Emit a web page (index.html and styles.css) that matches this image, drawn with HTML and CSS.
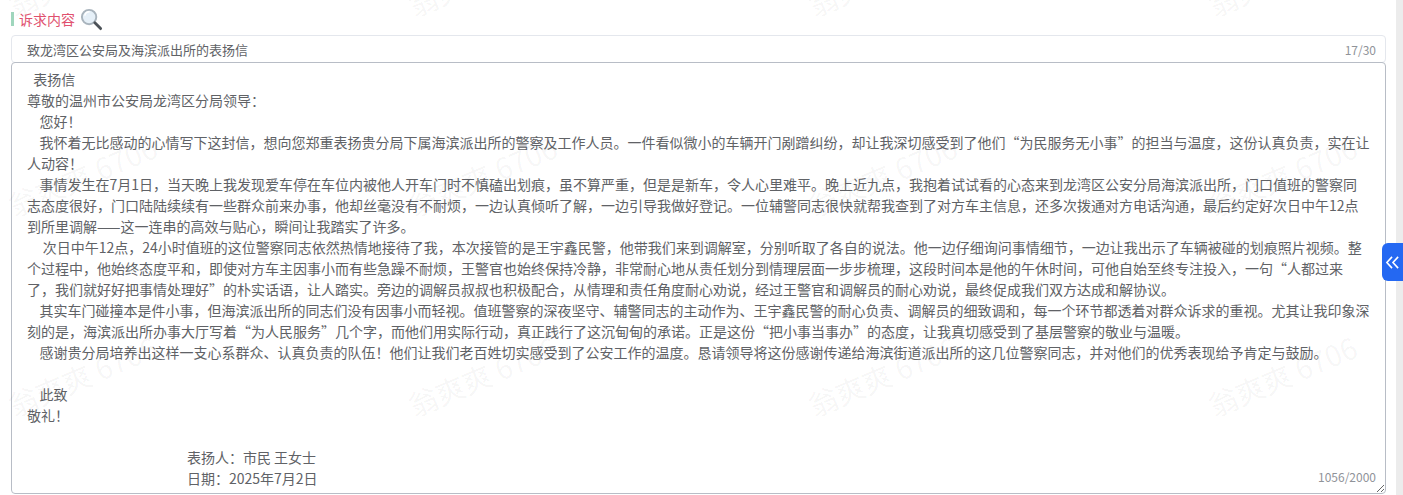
FILE: index.html
```html
<!DOCTYPE html>
<html>

<head>
    <title>诉求内容</title>
    <meta charset="UTF-8" />
    <link rel="stylesheet" href="styles.css">
</head>

<body>
    <div class="page">
        <div class="form">
            <div class="section__title">
                <span class="section__title--text">诉求内容</span>
                <svg class="section__title--icon" viewBox="0 0 24 24" width="23" height="23">
                    <circle cx="9.5" cy="9.5" r="7.5" fill="#e6f0f8" stroke="#a9b4bd" stroke-width="2" />
                    <path d="M5 8a5 5 0 0 1 5-4" fill="none" stroke="#ffffff" stroke-width="1.6" />
                    <path d="M15.5 15.5l6 6" stroke="#4c5258" stroke-width="3" stroke-linecap="round" />
                </svg>
            </div>
            <div class="field field--title">
                <input class="field__input" type="text" value="致龙湾区公安局及海滨派出所的表扬信" />
                <span class="field__count field__count--title">17/30</span>
            </div>
            <div class="field field--content">
                <textarea class="field__textarea">  表扬信
尊敬的温州市公安局龙湾区分局领导：
    您好！
    我怀着无比感动的心情写下这封信，想向您郑重表扬贵分局下属海滨派出所的警察及工作人员。一件看似微小的车辆开门剐蹭纠纷，却让我深切感受到了他们“为民服务无小事”的担当与温度，这份认真负责，实在让人动容！
    事情发生在7月1日，当天晚上我发现爱车停在车位内被他人开车门时不慎磕出划痕，虽不算严重，但是是新车，令人心里难平。晚上近九点，我抱着试试看的心态来到龙湾区公安分局海滨派出所，门口值班的警察同志态度很好，门口陆陆续续有一些群众前来办事，他却丝毫没有不耐烦，一边认真倾听了解，一边引导我做好登记。一位辅警同志很快就帮我查到了对方车主信息，还多次拨通对方电话沟通，最后约定好次日中午12点到所里调解——这一连串的高效与贴心，瞬间让我踏实了许多。
     次日中午12点，24小时值班的这位警察同志依然热情地接待了我，本次接管的是王宇鑫民警，他带我们来到调解室，分别听取了各自的说法。他一边仔细询问事情细节，一边让我出示了车辆被碰的划痕照片视频。整个过程中，他始终态度平和，即使对方车主因事小而有些急躁不耐烦，王警官也始终保持冷静，非常耐心地从责任划分到情理层面一步步梳理，这段时间本是他的午休时间，可他自始至终专注投入，一句“人都过来了，我们就好好把事情处理好”的朴实话语，让人踏实。旁边的调解员叔叔也积极配合，从情理和责任角度耐心劝说，经过王警官和调解员的耐心劝说，最终促成我们双方达成和解协议。
    其实车门碰撞本是件小事，但海滨派出所的同志们没有因事小而轻视。值班警察的深夜坚守、辅警同志的主动作为、王宇鑫民警的耐心负责、调解员的细致调和，每一个环节都透着对群众诉求的重视。尤其让我印象深刻的是，海滨派出所办事大厅写着“为人民服务”几个字，而他们用实际行动，真正践行了这沉甸甸的承诺。正是这份“把小事当事办”的态度，让我真切感受到了基层警察的敬业与温暖。
    感谢贵分局培养出这样一支心系群众、认真负责的队伍！他们让我们老百姓切实感受到了公安工作的温度。恳请领导将这份感谢传递给海滨街道派出所的这几位警察同志，并对他们的优秀表现给予肯定与鼓励。

    此致
敬礼！

                                                   表扬人：市民 王女士
                                                   日期：2025年7月2日</textarea>
                <span class="field__count field__count--content">1056/2000</span>
            </div>
        </div>
        <div class="scrollbar"></div>
        <button class="sideToggle">
            <svg viewBox="0 0 16 16" width="15" height="15">
                <path d="M7.5 2L2 8l5.5 6M14 2L8.5 8l5.5 6" fill="none" stroke="#ffffff" stroke-width="1.7" />
            </svg>
        </button>

        <!-- watermark -->
        <div class="watermark">
            <span>翁爽爽 6706</span><span>翁爽爽 6706</span><span>翁爽爽 6706</span><span>翁爽爽 6706</span>
            <span>翁爽爽 6706</span><span>翁爽爽 6706</span><span>翁爽爽 6706</span><span>翁爽爽 6706</span>
            <span>翁爽爽 6706</span><span>翁爽爽 6706</span><span>翁爽爽 6706</span><span>翁爽爽 6706</span>
        </div>
    </div>
</body>

</html>
```

FILE: styles.css
```css
:root {
    --border: #e4e7ed;
    --border-dark: #b8bdc6;
    --text: #606266;
    --count: #909399;
}

html,
body {
    margin: 0;
    height: 100%;
    overflow: hidden;
}

body {
    font-family: "Noto Sans CJK SC", "Noto Sans", sans-serif;
    font-size: 13px;
    color: var(--text);
    background-color: #ffffff;
}

.page {
    display: flex;
    height: 495px;
    position: relative;
    overflow: hidden;
}

.form {
    flex: 1;
    padding: 5px 10px 0 11px;
    min-width: 0;
}

.scrollbar {
    width: 7px;
    background-color: #ececec;
}

/* Section title */
.section__title {
    display: flex;
    align-items: center;
    height: 28px;
    margin-bottom: 2px;
}

.section__title--text {
    border-left: 3px solid #9fd6bd;
    padding-left: 5px;
    line-height: 14px;
    font-size: 14px;
    color: #e0506e;
}

.section__title--icon {
    margin-left: 5px;
}

/* Inputs */
.field {
    position: relative;
}

.field--title {
    height: 27px;
}

.field__input {
    display: block;
    box-sizing: border-box;
    width: 100%;
    height: 28px;
    padding: 0 15px;
    border: 1px solid var(--border);
    border-radius: 4px;
    font-family: inherit;
    font-size: 13px;
    color: var(--text);
}

.field__textarea {
    display: block;
    box-sizing: border-box;
    width: 100%;
    height: 432px;
    padding: 6px 15px;
    border: 1px solid var(--border-dark);
    border-radius: 4px;
    font-family: inherit;
    font-size: 14px;
    line-height: 21px;
    color: var(--text);
    background-color: transparent;
    outline: none;
    overflow: hidden;
}

.field__count {
    position: absolute;
    right: 10px;
    font-size: 12px;
    line-height: 16px;
    color: var(--count);
    background-color: #ffffff;
}

.field__count--title {
    bottom: 4px;
}

.field__count--content {
    bottom: 9px;
}

/* Side toggle */
.sideToggle {
    position: absolute;
    top: 243px;
    right: 0;
    width: 21px;
    height: 38px;
    padding: 0;
    border: none;
    border-radius: 6px 0 0 6px;
    background-color: #2468f2;
    display: flex;
    align-items: center;
    justify-content: center;
}

/* Watermark */
.watermark {
    position: absolute;
    top: -125px;
    left: -118px;
    display: grid;
    grid-template-columns: repeat(4, 400px);
    grid-auto-rows: 200px;
    pointer-events: none;
}

.watermark>span {
    display: flex;
    align-items: center;
    justify-content: center;
    font-size: 29px;
    color: rgba(0, 0, 0, 0.045);
    white-space: nowrap;
    transform: rotate(-23deg);
}
```
